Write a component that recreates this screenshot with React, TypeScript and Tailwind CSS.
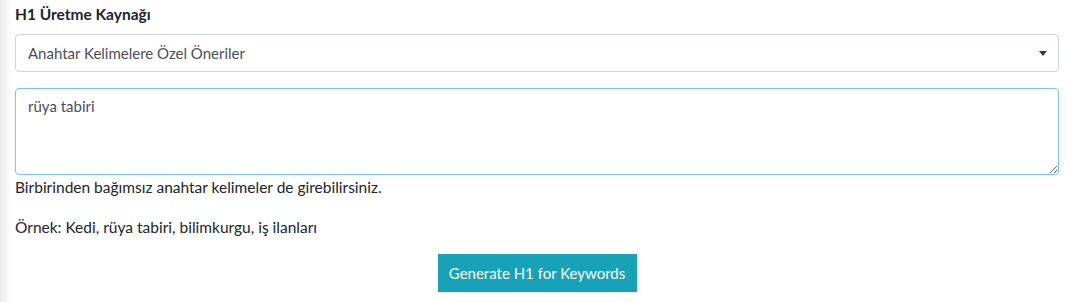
import React from "react";

export default function App() {
  const font = { fontFamily: "Lato, 'Open Sans', sans-serif" };
  return (
    <div className="w-[1077px] h-[302px] bg-white overflow-hidden relative text-[#212529]" style={font}>
      <div className="absolute left-0 top-0 h-full w-[12px] bg-gradient-to-r from-[#ececec] to-white" />
      <div className="relative pl-[15px] pr-[18px] pt-[2px]">
        <div className="font-bold text-[15.5px] leading-[24px] mb-[8px]">H1 Üretme Kaynağı</div>
        <div className="h-[38px] border border-[#ced4da] rounded-[4px] flex items-center justify-between pl-[12px] pr-[11px] text-[15px] text-[#495057]">
          <span>Anahtar Kelimelere Özel Öneriler</span>
          <svg width="8" height="5" viewBox="0 0 8 5"><path d="M0 0h8L4 5z" fill="#343a40" /></svg>
        </div>
        <textarea
          className="mt-[16px] block w-full h-[87px] border border-[#80bdff] rounded-[4px] px-[12px] pt-[6px] text-[15px] leading-[22px] text-[#495057] outline-none"
          style={font}
          defaultValue="rüya tabiri"
          autoFocus
        />
        <div className="text-[15.5px] leading-[24px] mt-[0px]">Birbirinden bağımsız anahtar kelimeler de girebilirsiniz.</div>
        <div className="text-[15.5px] leading-[24px] mt-[16px]">Örnek: Kedi, rüya tabiri, bilimkurgu, iş ilanları</div>
        <div className="flex justify-center mt-[15px]">
          <button className="bg-[#17a2b8] text-white text-[15px] h-[38px] w-[199px]">Generate H1 for Keywords</button>
        </div>
      </div>
    </div>
  );
}
